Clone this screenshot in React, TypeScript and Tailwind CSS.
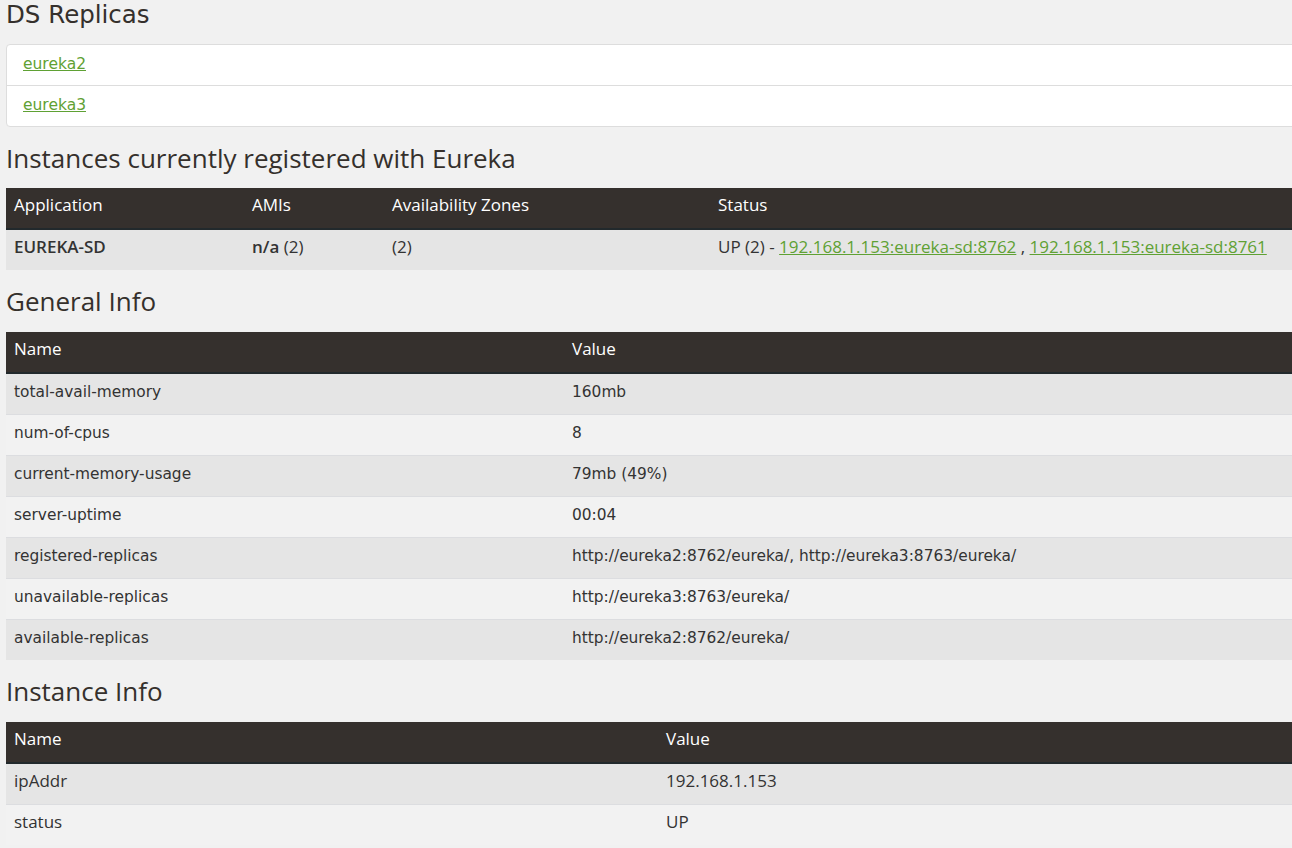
import React from 'react';

const wide = "font-['DejaVu_Sans',sans-serif]";
const narrow = "font-['Open_Sans',sans-serif]";

const Heading = ({ children, first, tight }: { children: React.ReactNode; first?: boolean; tight?: boolean }) => (
  <h2
    className={`${first ? `${wide} h-[44px] pb-[14px] text-[24.5px]` : `${narrow} ${tight ? 'h-[61px]' : 'h-[62px]'} text-[26px] font-medium`} flex items-center text-[#35302c] leading-none`}
  >
    {children}
  </h2>
);

const Link = ({ children, className = '' }: { children: React.ReactNode; className?: string }) => (
  <a href="#" className={`text-[#5fa134] underline ${className}`}>
    {children}
  </a>
);

type Row = React.ReactNode[];

const Table = ({ cols, rows, widths, bodyFont }: { cols: string[]; rows: Row[]; widths: string[]; bodyFont: string }) => (
  <table className="w-full border-collapse text-[#333]">
    <thead>
      <tr className={`bg-[#35302d] text-white ${narrow} text-[17px] leading-[20px] h-[41px] border-b-2 border-[#22292c]`}>
        {cols.map((c, i) => (
          <th key={c} className={`${widths[i]} text-left font-normal px-[8px] pb-[6px]`}>
            {c}
          </th>
        ))}
      </tr>
    </thead>
    <tbody>
      {rows.map((r, i) => (
        <tr
          key={i}
          className={`h-[41px] ${bodyFont} leading-[20px] ${i > 0 ? 'border-t border-[#dcdde0]' : ''} ${i % 2 === 0 ? 'bg-[#e5e5e5]' : 'bg-[#f2f2f2]'}`}
        >
          {r.map((c, j) => (
            <td key={j} className="px-[8px] pb-[3px]">
              {c}
            </td>
          ))}
        </tr>
      ))}
    </tbody>
  </table>
);

const general: [string, string][] = [
  ['total-avail-memory', '160mb'],
  ['num-of-cpus', '8'],
  ['current-memory-usage', '79mb (49%)'],
  ['server-uptime', '00:04'],
  ['registered-replicas', 'http://eureka2:8762/eureka/, http://eureka3:8763/eureka/'],
  ['unavailable-replicas', 'http://eureka3:8763/eureka/'],
  ['available-replicas', 'http://eureka2:8762/eureka/'],
];

export default function App() {
  return (
    <div className="min-h-screen w-full overflow-hidden bg-[#f1f1f1]">
      <div className="w-[1330px] px-[6px]">
        <Heading first>DS Replicas</Heading>
        <ul className={`${wide} text-[15.5px] bg-white border border-[#dddddd] rounded-[4px]`}>
          <li className="h-[41px] flex items-center px-[16px] border-b border-[#dddddd]">
            <Link>eureka2</Link>
          </li>
          <li className="h-[40px] flex items-center px-[16px]">
            <Link>eureka3</Link>
          </li>
        </ul>

        <Heading tight>Instances currently registered with Eureka</Heading>
        <Table
          bodyFont={`${narrow} text-[17px] [&>td]:pb-[6px]`}
          cols={['Application', 'AMIs', 'Availability Zones', 'Status']}
          widths={['w-[238px]', 'w-[140px]', 'w-[326px]', '']}
          rows={[
            [
              <b key="a" className="font-semibold">EUREKA-SD</b>,
              <span key="b"><b className="font-semibold">n/a</b> (2)</span>,
              '(2)',
              <span key="d">
                UP (2) - <Link>192.168.1.153:eureka-sd:8762</Link> , <Link>192.168.1.153:eureka-sd:8761</Link>
              </span>,
            ],
          ]}
        />

        <Heading>General Info</Heading>
        <Table
          bodyFont={`${wide} text-[15.4px]`}
          cols={['Name', 'Value']}
          widths={['w-[558px]', '']}
          rows={general.map(([k, v]) => [k, v])}
        />

        <Heading>Instance Info</Heading>
        <Table
          bodyFont={`${narrow} text-[17px] [&>td]:pb-[5px]`}
          cols={['Name', 'Value']}
          widths={['w-[652px]', '']}
          rows={[
            ['ipAddr', '192.168.1.153'],
            ['status', 'UP'],
          ]}
        />
      </div>
    </div>
  );
}
